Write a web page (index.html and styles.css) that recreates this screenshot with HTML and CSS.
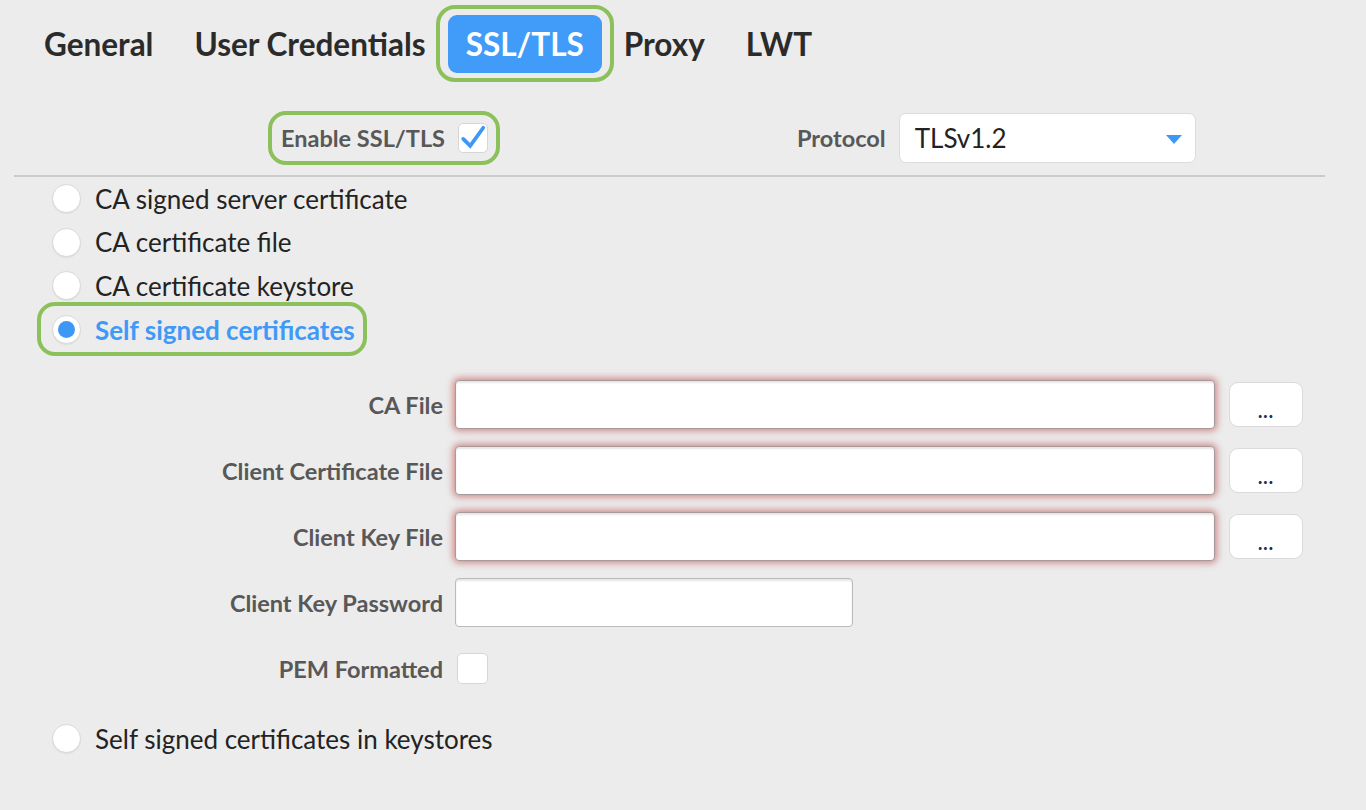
FILE: index.html
```html
<!DOCTYPE html>
<html lang="en">
<head>
<meta charset="utf-8">
<title>SSL/TLS</title>
<link rel="stylesheet" href="styles.css">
</head>
<body>
<div class="page">
  <nav class="tabs">
    <span class="tab">General</span>
    <span class="tab">User Credentials</span>
    <span class="tab tab-active highlight">SSL/TLS</span>
    <span class="tab">Proxy</span>
    <span class="tab">LWT</span>
  </nav>

  <div class="top-row">
    <label class="enable highlight">
      <span class="field-label">Enable SSL/TLS</span>
      <span class="check checked">
        <svg viewBox="0 0 30 30" width="30" height="30"><path d="M4.5 16 L12 23.5 L26 4" fill="none" stroke="#3d97f5" stroke-width="4" stroke-linecap="round" stroke-linejoin="miter"/></svg>
      </span>
    </label>
    <div class="protocol">
      <span class="field-label">Protocol</span>
      <div class="select">
        <span>TLSv1.2</span>
        <svg class="caret" viewBox="0 0 16 9" width="16" height="9"><path d="M0 0 H16 L8 9 Z" fill="#3d97f5"/></svg>
      </div>
    </div>
  </div>

  <div class="divider"></div>

  <ul class="radios">
    <li class="radio-row"><span class="radio"></span><span class="radio-label">CA signed server certificate</span></li>
    <li class="radio-row"><span class="radio"></span><span class="radio-label">CA certificate file</span></li>
    <li class="radio-row"><span class="radio"></span><span class="radio-label">CA certificate keystore</span></li>
    <li class="radio-row selected highlight"><span class="radio"><span class="dot"></span></span><span class="radio-label">Self signed certificates</span></li>
  </ul>

  <div class="form">
    <span class="field-label">CA File</span>
    <div class="input invalid"></div>
    <button class="browse">...</button>

    <span class="field-label">Client Certificate File</span>
    <div class="input invalid"></div>
    <button class="browse">...</button>

    <span class="field-label">Client Key File</span>
    <div class="input invalid"></div>
    <button class="browse">...</button>

    <span class="field-label">Client Key Password</span>
    <div class="input short"></div>
    <span></span>

    <span class="field-label">PEM Formatted</span>
    <div class="pem"><span class="check small"></span></div>
    <span></span>
  </div>

  <ul class="radios last">
    <li class="radio-row"><span class="radio"></span><span class="radio-label">Self signed certificates in keystores</span></li>
  </ul>
</div>
</body>
</html>
```

FILE: styles.css
```css
* { box-sizing: border-box; }
html, body { margin: 0; padding: 0; }
body {
  background: #ececec;
  font-family: Lato, "Open Sans", sans-serif;
  color: #222;
  width: 1366px;
  height: 810px;
  overflow: hidden;
}

/* Tabs */
.tabs {
  display: flex;
  align-items: center;
  padding: 15px 0 0 25px;
  gap: 3px;
  height: 73px;
}
.tab {
  position: relative;
  font-weight: 700;
  font-size: 31.5px;
  color: #2b2b2b;
  padding: 0 19px;
  height: 58px;
  line-height: 59px;
  border-radius: 9px;
}
.tab-active {
  background: #419bf8;
  color: #fff;
  padding: 0 18px;
}
.highlight { position: relative; }
.highlight::after {
  content: "";
  position: absolute;
  border: 4.5px solid #8cc05b;
  pointer-events: none;
}
.tab-active::after {
  inset: -10px -12px -9px -12px;
  border-radius: 19px;
}

/* Top row */
.top-row {
  display: flex;
  align-items: center;
  height: 50px;
  margin-top: 40px;
  padding-left: 281px;
}
.field-label {
  font-weight: 700;
  font-size: 23.5px;
  color: #585858;
}
.enable {
  display: flex;
  align-items: center;
  gap: 13px;
}
.enable::after {
  inset: -12px -12px -12px -13px;
  border-radius: 18px;
}
.check {
  width: 30px;
  height: 30px;
  background: #fff;
  border: 1px solid #d6d6d6;
  border-radius: 5px;
  display: inline-flex;
  align-items: center;
  justify-content: center;
}
.check svg { display: block; }
.protocol {
  display: flex;
  align-items: center;
  gap: 13px;
  margin-left: 309px;
}
.select {
  width: 297px;
  height: 50px;
  background: #fff;
  border: 1px solid #dcdcdc;
  border-radius: 7px;
  display: flex;
  align-items: center;
  justify-content: space-between;
  padding: 0 13px 0 15px;
  font-size: 26px;
  color: #222;
}
.caret { display: block; margin-top: 2px; }

.divider {
  height: 2px;
  background: #cbcbcb;
  margin: 12px 41px 0 14px;
}

/* Radios */
.radios {
  list-style: none;
  margin: 0;
  padding: 7px 0 0 52px;
  display: flex;
  flex-direction: column;
  gap: 14.7px;
}
.radio-row {
  display: flex;
  align-items: center;
  gap: 14px;
  height: 29px;
  width: max-content;
}
.radio {
  width: 29px;
  height: 29px;
  border-radius: 50%;
  background: #fff;
  border: 1px solid #d8d8d8;
  box-shadow: 0 1px 1px rgba(0,0,0,0.06);
  display: inline-flex;
  align-items: center;
  justify-content: center;
}
.dot {
  width: 17px;
  height: 17px;
  border-radius: 50%;
  background: #3d97f5;
}
.radio-label {
  font-size: 26px;
  color: #232323;
}
.selected .radio-label {
  color: #3f9af7;
  font-weight: 700;
}
.selected::after {
  inset: -13px -12px -12px -15px;
  border-radius: 18px;
}

/* Form */
.form {
  display: grid;
  grid-template-columns: 443px 760px 74px;
  grid-auto-rows: 49px;
  column-gap: 12px;
  row-gap: 17px;
  align-items: center;
  margin-top: 36px;
}
.form .field-label { text-align: right; }
.form > :nth-child(3n) { margin-left: 2px; }
.input {
  height: 49px;
  background: #fff;
  border: 1px solid #b4b4b4;
  border-radius: 4px;
  box-shadow: inset 0 2px 2px rgba(0,0,0,0.10);
}
.input.invalid {
  border: 1.5px solid #a89a9a;
  box-shadow: 0 0 7px 2px rgba(190, 70, 70, 0.6), inset 0 2px 2px rgba(0,0,0,0.10);
}
.input.short { width: 398px; border-color: #bababa; }
.browse {
  width: 74px;
  height: 45px;
  background: #fff;
  border: 1.5px solid #dadada;
  border-radius: 9px;
  font-family: Lato, sans-serif;
  font-weight: 900;
  font-size: 18px;
  line-height: 1;
  color: #1f2f48;
  padding: 12px 0 0 0;
  letter-spacing: 1px;
}
.pem { display: flex; align-items: center; }
.check.small { width: 31px; height: 31px; margin-left: 2px; }

.radios.last { padding-top: 31px; }
```
